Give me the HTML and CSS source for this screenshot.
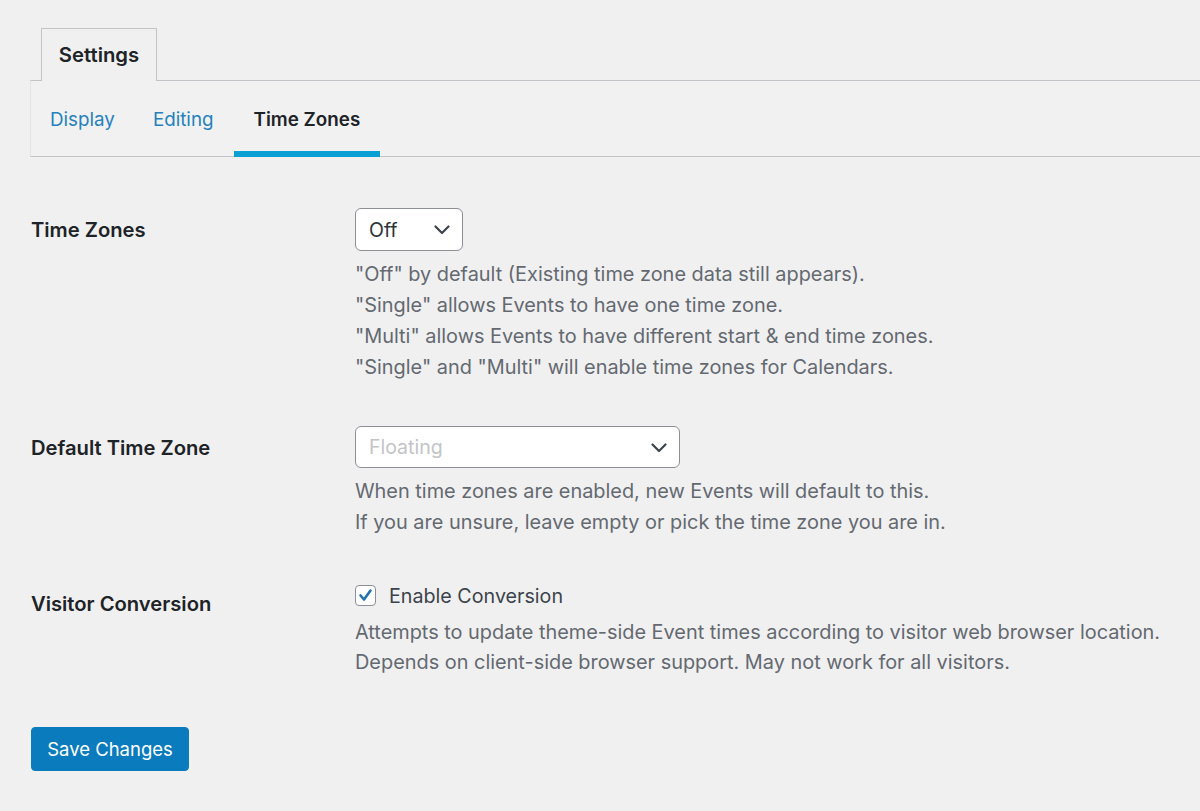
FILE: index.html
```html
<!DOCTYPE html>
<html>
<head>
<meta charset="utf-8">
<link rel="stylesheet" href="styles.css">
</head>
<body>
<div class="page">
  <div class="top-tabs">
    <div class="top-tab">Settings</div>
  </div>
  <nav class="subnav">
    <a class="subnav-link">Display</a>
    <a class="subnav-link">Editing</a>
    <a class="subnav-link active">Time Zones</a>
  </nav>
  <div class="form">
    <div class="row row-tz">
      <div class="th th-select">Time Zones</div>
      <div class="td">
        <div class="select select-small">
          <span class="select-value">Off</span>
          <svg class="chev" width="16" height="10" viewBox="0 0 16 10"><polyline points="1.5,1.5 8,8 14.5,1.5" fill="none" stroke="#3c434a" stroke-width="2.2" stroke-linecap="round" stroke-linejoin="round"/></svg>
        </div>
        <div class="desc">
          <p>"Off" by default (Existing time zone data still appears).</p>
          <p>"Single" allows Events to have one time zone.</p>
          <p>"Multi" allows Events to have different start &amp; end time zones.</p>
          <p>"Single" and "Multi" will enable time zones for Calendars.</p>
        </div>
      </div>
    </div>
    <div class="row row-default">
      <div class="th th-select">Default Time Zone</div>
      <div class="td">
        <div class="select select-wide">
          <span class="select-value placeholder">Floating</span>
          <svg class="chev" width="16" height="10" viewBox="0 0 16 10"><polyline points="1.5,1.5 8,8 14.5,1.5" fill="none" stroke="#3c434a" stroke-width="2.2" stroke-linecap="round" stroke-linejoin="round"/></svg>
        </div>
        <div class="desc">
          <p>When time zones are enabled, new Events will default to this.</p>
          <p>If you are unsure, leave empty or pick the time zone you are in.</p>
        </div>
      </div>
    </div>
    <div class="row row-visitor">
      <div class="th th-check">Visitor Conversion</div>
      <div class="td">
        <label class="check-line">
          <span class="checkbox">
            <svg width="17" height="17" viewBox="0 0 17 17"><polyline points="3.5,8.5 7,12.5 13.5,3.5" fill="none" stroke="#2271b1" stroke-width="2.6" stroke-linecap="round" stroke-linejoin="round"/></svg>
          </span>
          <span class="check-text">Enable Conversion</span>
        </label>
        <div class="desc desc-tight">
          <p>Attempts to update theme-side Event times according to visitor web browser location.</p>
          <p>Depends on client-side browser support. May not work for all visitors.</p>
        </div>
      </div>
    </div>
    <div class="submit">
      <button class="button-primary">Save Changes</button>
    </div>
  </div>
</div>
</body>
</html>
```

FILE: styles.css
```css
html, body {
  margin: 0;
  padding: 0;
  background: #f0f0f1;
}
body {
  font-family: Inter, "Noto Sans", "Liberation Sans", sans-serif;
  color: #3c434a;
  width: 1200px;
  height: 811px;
  overflow: hidden;
}
.page {
  padding-left: 31px;
}
.top-tabs {
  height: 80px;
  display: flex;
  align-items: flex-end;
  padding-left: 10px;
}
.top-tab {
  box-sizing: border-box;
  height: 53px;
  width: 116px;
  margin-bottom: -1px;
  border: 1px solid #c3c4c7;
  border-bottom: none;
  background: #f0f0f1;
  font-size: 20.3px;
  font-weight: 600;
  color: #1d2327;
  display: flex;
  align-items: center;
  justify-content: center;
  padding-bottom: 2px;
  position: relative;
  z-index: 0;
}
.subnav {
  box-sizing: border-box;
  height: 77px;
  border-top: 1px solid #c3c4c7;
  border-bottom: 1px solid #c3c4c7;
  border-left: 1px solid #e4e4e5;
  background: #f1f1f1;
  display: flex;
  margin-left: -1px;
}
.subnav-link {
  box-sizing: border-box;
  padding: 6px 19px 0;
  display: flex;
  align-items: center;
  font-size: 18.8px;
  color: #2581bd;
  height: 76px;
  border-bottom: 6px solid transparent;
}
.subnav-link.active {
  color: #1d2327;
  font-weight: 600;
  border-bottom-color: #0aa0d4;
  padding: 6px 20px 0;
  margin-left: 1px;
}
.form {
  padding-top: 51px;
}
.row {
  display: grid;
  grid-template-columns: 324px 1fr;
}
.row-default {
  margin-top: 43.5px;
}
.row-visitor {
  margin-top: 43px;
}
.th {
  font-size: 20.2px;
  font-weight: 600;
  color: #1d2327;
}
.th-select {
  line-height: 43px;
}
.th-check {
  line-height: 31px;
  padding-top: 7px;
}
.select {
  box-sizing: border-box;
  height: 43px;
  background: #fff;
  border: 1.5px solid #8c8f94;
  border-radius: 6px;
  display: flex;
  align-items: center;
  justify-content: space-between;
  padding: 0 12px 0 13px;
  font-size: 19.5px;
  color: #2c3338;
}
.select-small {
  width: 108px;
}
.select-wide {
  width: 325px;
  height: 42px;
}
.placeholder {
  color: #c3c4c7;
}
.chev {
  display: block;
  margin-top: 1px;
}
.desc {
  margin-top: 7.5px;
  font-size: 19.9px;
  line-height: 31px;
  color: #646970;
}
.desc p {
  margin: 0;
}
.desc-tight {
  margin-top: 5px;
  line-height: 30px;
}
.check-line {
  display: flex;
  align-items: center;
  height: 31px;
  gap: 13px;
}
.checkbox {
  box-sizing: border-box;
  width: 21px;
  height: 21px;
  border: 1.5px solid #8c8f94;
  border-radius: 4px;
  background: #fff;
  display: flex;
  align-items: center;
  justify-content: center;
  margin-top: -2px;
}
.checkbox svg {
  display: block;
}
.check-text {
  font-size: 19.7px;
  color: #3c434a;
}
.submit {
  margin-top: 50.5px;
}
.button-primary {
  box-sizing: border-box;
  width: 158px;
  height: 44px;
  background: #0a7bbd;
  border: 1px solid #0a7bbd;
  border-radius: 4px;
  color: #fff;
  font-family: inherit;
  font-size: 18.5px;
  padding: 0 0 1px;
  margin: 0;
}
```
